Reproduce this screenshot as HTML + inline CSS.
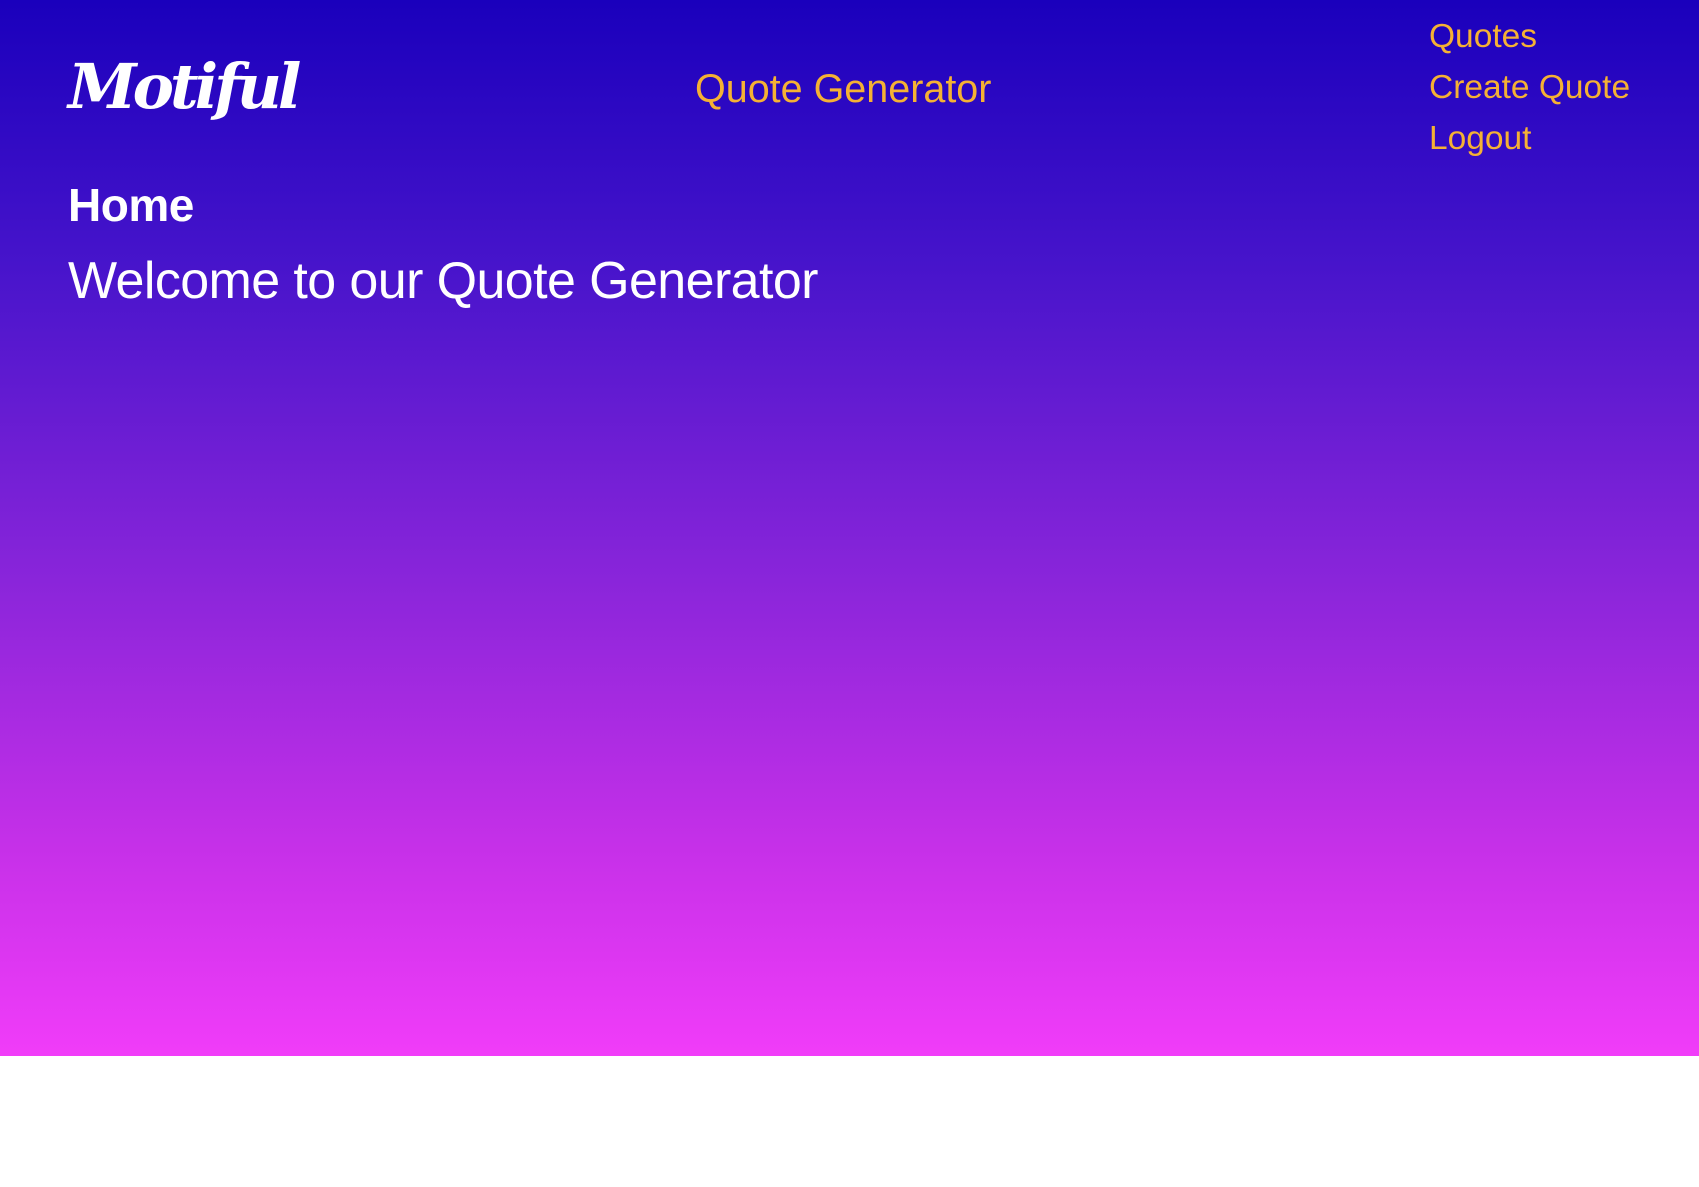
<!DOCTYPE html>
<html><head><meta charset="utf-8"><style>
html,body{margin:0;padding:0;width:1699px;height:1187px;background:#fff;overflow:hidden}
.bg{position:absolute;left:0;top:0;width:1699px;height:1056px;background:linear-gradient(#1a00bc 0%,#4714cb 25%,#8a25da 55%,#c530e8 80%,#f13cf9 100%)}
.t{position:absolute;font-family:"Liberation Sans",sans-serif;white-space:nowrap}
.logo{left:68px;top:50px;font-family:"DejaVu Serif","Liberation Serif",serif;font-style:italic;font-weight:bold;font-size:62px;color:#fff;letter-spacing:-4px}
.o{color:#f5b134}
</style></head><body>
<div class="bg"></div>
<div class="t logo">Motiful</div>
<div class="t o" style="left:695px;top:67px;font-size:39.5px">Quote Generator</div>
<div class="t o" style="left:1429px;top:18px;font-size:33.5px">Quotes</div>
<div class="t o" style="left:1429px;top:69px;font-size:33.5px">Create Quote</div>
<div class="t o" style="left:1429px;top:120px;font-size:33.5px">Logout</div>
<div class="t" style="left:68px;top:178px;font-size:46px;color:#fff;font-weight:bold;letter-spacing:-0.5px">Home</div>
<div class="t" style="left:68px;top:251px;font-size:52px;color:#fff;letter-spacing:-0.6px">Welcome to our Quote Generator</div>
</body></html>
